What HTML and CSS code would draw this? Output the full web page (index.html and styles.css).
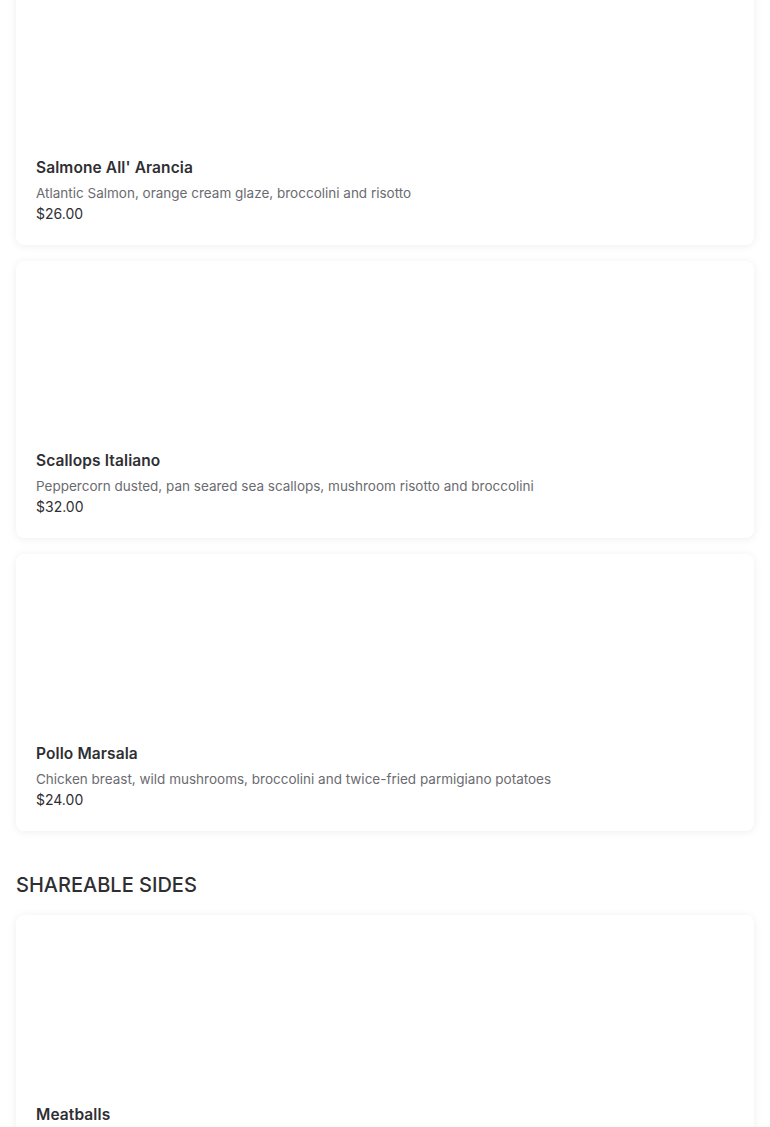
FILE: index.html
```html
<!DOCTYPE html>
<html lang="en">
<head>
<meta charset="utf-8">
<title>Menu</title>
<link rel="stylesheet" href="styles.css">
</head>
<body>
<main class="menu">
  <section class="section">
    <article class="card">
      <div class="media"></div>
      <div class="info">
        <h3 class="name">Salmone All' Arancia</h3>
        <p class="desc">Atlantic Salmon, orange cream glaze, broccolini and risotto</p>
        <p class="price">$26.00</p>
      </div>
    </article>
    <article class="card">
      <div class="media"></div>
      <div class="info">
        <h3 class="name">Scallops Italiano</h3>
        <p class="desc">Peppercorn dusted, pan seared sea scallops, mushroom risotto and broccolini</p>
        <p class="price">$32.00</p>
      </div>
    </article>
    <article class="card">
      <div class="media"></div>
      <div class="info">
        <h3 class="name">Pollo Marsala</h3>
        <p class="desc">Chicken breast, wild mushrooms, broccolini and twice-fried parmigiano potatoes</p>
        <p class="price">$24.00</p>
      </div>
    </article>
  </section>
  <section class="section">
    <h2 class="section-title">SHAREABLE SIDES</h2>
    <article class="card">
      <div class="media"></div>
      <div class="info">
        <h3 class="name">Meatballs</h3>
      </div>
    </article>
  </section>
</main>
</body>
</html>
```

FILE: styles.css
```css
html, body {
  margin: 0;
  padding: 0;
  background: #ffffff;
}
body {
  font-family: "Inter", "Liberation Sans", sans-serif;
  color: #333;
  overflow: hidden;
}
.menu {
  margin-top: -32px;
  padding: 0 16px;
  display: flex;
  flex-direction: column;
  gap: 40px;
}
.section {
  display: flex;
  flex-direction: column;
  gap: 16px;
}
.section-title {
  margin: 0;
  font-size: 20px;
  line-height: 28px;
  font-weight: 500;
  letter-spacing: 0;
  color: #2f2f33;
}
.card {
  background: #fff;
  border-radius: 8px;
  box-shadow: 0 1px 8px rgba(0, 0, 0, 0.07);
  overflow: hidden;
}
.media {
  height: 188px;
}
.info {
  padding: 0 20px 21px;
}
.name {
  margin: 0 0 3px;
  font-size: 15.5px;
  line-height: 24px;
  font-weight: 600;
  color: #2f2f33;
  letter-spacing: 0.1px;
}
.desc {
  margin: 0 0 1px;
  font-size: 13.5px;
  line-height: 20px;
  color: #6b6b70;
}
.price {
  margin: 0;
  font-size: 14px;
  line-height: 20px;
  color: #2f2f33;
}
```
